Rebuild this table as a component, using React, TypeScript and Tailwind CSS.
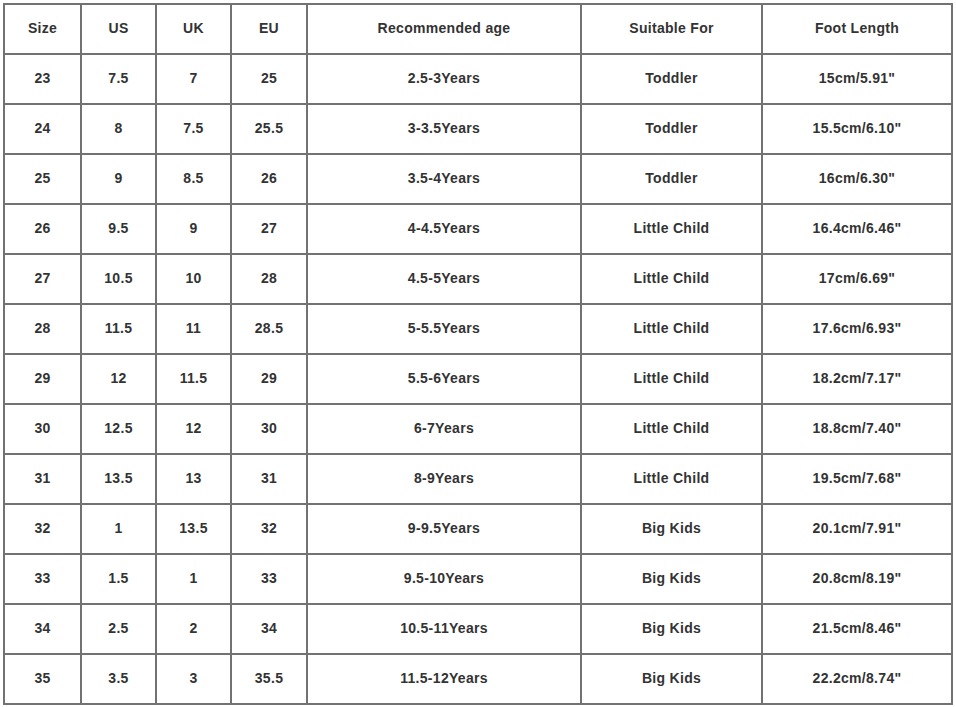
import React from "react";

const header = ["Size", "US", "UK", "EU", "Recommended age", "Suitable For", "Foot Length"];

const rows: string[][] = [
  ["23", "7.5", "7", "25", "2.5-3Years", "Toddler", "15cm/5.91\""],
  ["24", "8", "7.5", "25.5", "3-3.5Years", "Toddler", "15.5cm/6.10\""],
  ["25", "9", "8.5", "26", "3.5-4Years", "Toddler", "16cm/6.30\""],
  ["26", "9.5", "9", "27", "4-4.5Years", "Little Child", "16.4cm/6.46\""],
  ["27", "10.5", "10", "28", "4.5-5Years", "Little Child", "17cm/6.69\""],
  ["28", "11.5", "11", "28.5", "5-5.5Years", "Little Child", "17.6cm/6.93\""],
  ["29", "12", "11.5", "29", "5.5-6Years", "Little Child", "18.2cm/7.17\""],
  ["30", "12.5", "12", "30", "6-7Years", "Little Child", "18.8cm/7.40\""],
  ["31", "13.5", "13", "31", "8-9Years", "Little Child", "19.5cm/7.68\""],
  ["32", "1", "13.5", "32", "9-9.5Years", "Big Kids", "20.1cm/7.91\""],
  ["33", "1.5", "1", "33", "9.5-10Years", "Big Kids", "20.8cm/8.19\""],
  ["34", "2.5", "2", "34", "10.5-11Years", "Big Kids", "21.5cm/8.46\""],
  ["35", "3.5", "3", "35.5", "11.5-12Years", "Big Kids", "22.2cm/8.74\""],
];

export default function App() {
  const all = [header, ...rows];
  return (
    <div className="w-[956px] h-[707px] bg-white pt-[3px] pl-[3px] font-['Liberation_Sans',Arial,sans-serif]">
      <div className="inline-grid grid-cols-[75px_73px_73px_74px_272px_179px_188px] auto-rows-[48px] gap-[2px] p-[2px] bg-[#727272]">
        {all.map((r, i) =>
          r.map((c, j) => (
            <div
              key={`${i}-${j}`}
              className="bg-white flex items-center justify-center pb-[3px] text-[14px] font-bold tracking-[0.3px] text-[#333333] leading-none whitespace-nowrap"
            >
              {c}
            </div>
          ))
        )}
      </div>
    </div>
  );
}
